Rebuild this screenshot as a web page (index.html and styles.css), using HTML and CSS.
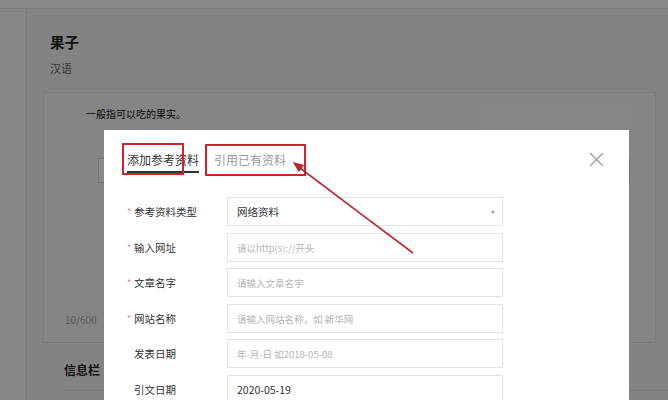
FILE: index.html
```html
<!DOCTYPE html>
<html lang="zh-CN">
<head>
  <meta charset="UTF-8" />
  <title>果子 - 添加参考资料</title>
  <link rel="stylesheet" href="styles.css">
</head>
<body>

<div class="topbar"></div>
<div class="layout">
  <div class="side"></div>
  <div class="main">
    <div class="head">
      <h1>果子</h1>
      <div class="lang">汉语</div>
    </div>
    <div class="card">
      <div class="card-row">
        <p class="desc">一般指可以吃的果实。</p>
        <div class="side-box"></div>
      </div>
      <div class="field-box"></div>
      <div class="count">10/600</div>
    </div>
    <h3 class="section">信息栏</h3>
  </div>
</div>

<div class="mask"></div>

<div class="modal">
  <div class="tabs">
    <div class="tab active">添加参考资料</div>
    <div class="tab">引用已有资料</div>
  </div>
  <span class="close">
    <svg width="15" height="15" viewBox="0 0 15 15"><path d="M1 1L14 14M14 1L1 14" stroke="#999" stroke-width="1.2" fill="none"/></svg>
  </span>

  <div class="form">
    <div class="row">
      <label><i>*</i>参考资料类型</label>
      <div class="input select">网络资料<b class="caret"></b></div>
    </div>
    <div class="row">
      <label><i>*</i>输入网址</label>
      <input class="input" placeholder="请以http(s)://开头">
    </div>
    <div class="row">
      <label><i>*</i>文章名字</label>
      <input class="input" placeholder="请输入文章名字">
    </div>
    <div class="row">
      <label><i>*</i>网站名称</label>
      <input class="input" placeholder="请输入网站名称，如 新华网">
    </div>
    <div class="row">
      <label><i class="off">*</i>发表日期</label>
      <input class="input" placeholder="年-月-日 如2018-05-08">
    </div>
    <div class="row">
      <label><i class="off">*</i>引文日期</label>
      <input class="input" value="2020-05-19">
    </div>
  </div>

  <!-- red marks drawn on the screenshot -->
  <div class="mark mark-1"></div>
  <div class="mark mark-2"></div>
  <svg class="arrow" width="525" height="270" viewBox="0 0 525 270">
    <line x1="309" y1="123" x2="196" y2="38" stroke="#c0272d" stroke-width="1.6"/>
    <polygon points="188.7,32 200.2,35 194.8,42.2" fill="#c0272d"/>
  </svg>
</div>

</body>
</html>
```

FILE: styles.css
```css
body {
  margin: 0;
  font-family: "Noto Sans CJK SC", "Noto Sans", sans-serif;
  background: #f3f3f3;
  color: #333;
  overflow: hidden;
}

.topbar { height: 8px; background: #fff; border-bottom: 1px solid #e6e6e6; }
.layout { display: flex; height: 391px; }
.side { width: 26px; background: #f7f7f7; border-right: 1px solid #e0e0e0; }
.main { flex: 1; }

.head { padding: 24px 0 0 23px; }
.head h1 { margin: 0; font-size: 14.5px; line-height: 18px; font-weight: bold; color: #222; }
.lang { margin-top: 9px; font-size: 11px; line-height: 16px; color: #666; }

.card {
  margin: 16px 12px 0 16px;
  padding: 12px 25px 15px 21px;
  background: #f5f5f5;
  border: 1px solid #e6e6e6;
  border-bottom-color: #e0e0e0;
}
.card-row { display: flex; justify-content: space-between; align-items: flex-start; padding-left: 21px; }
.desc { margin: 2px 0 0; font-size: 10px; line-height: 14px; color: #111; }
.side-box { width: 148px; height: 26px; background: #f8f8f8; }
.field-box { margin: 27px 0 0 33px; height: 23px; background: #fff; border: 1px solid #dcdcdc; }
.count { margin-top: 130px; font-size: 10px; line-height: 14px; color: #aaa; }

.section {
  margin: 19px 0 0 37px;
  padding-bottom: 12px;
  border-bottom: 1px solid #e4e4e4;
  font-size: 12px;
  line-height: 16px;
  color: #222;
}

.mask { position: fixed; top: 0; left: 0; right: 0; bottom: 0; background: rgba(0,0,0,.46); }

.modal {
  position: absolute;
  left: 104px;
  top: 130px;
  width: 525px;
  height: 300px;
  box-sizing: border-box;
  padding: 20px 0 0 23px;
  background: #fff;
}

.tabs { display: flex; gap: 15px; }
.tab {
  font-size: 12px;
  line-height: 20px;
  padding-bottom: 1px;
  color: #999;
  border-bottom: 2px solid transparent;
}
.tab.active { color: #333; border-bottom-color: #333; }

.close { position: absolute; top: 22px; right: 25px; width: 15px; height: 15px; }
.close svg { display: block; }

.form { margin-top: 24px; display: flex; flex-direction: column; gap: 6.6px; }
.row { display: flex; align-items: center; height: 29px; }
.row label { width: 100px; font-size: 10.5px; color: #333; display: flex; align-items: center; }
.row label i { width: 7px; font-style: normal; font-size: 9px; color: #f08080; }
.row label i.off { visibility: hidden; }

.input {
  width: 276px;
  height: 29px;
  box-sizing: border-box;
  padding: 0 9px;
  border: 1px solid #e3e3e3;
  font-family: inherit;
  font-size: 10.5px;
  color: #333;
  outline: none;
  background: #fff;
}
.input::placeholder { font-size: 9.5px; color: #b5b5b5; }
.select { display: flex; align-items: center; position: relative; }
.caret {
  position: absolute;
  right: 7px;
  top: 13px;
  border-left: 2.5px solid transparent;
  border-right: 2.5px solid transparent;
  border-top: 3px solid #999;
}

.mark { position: absolute; border: 2px solid #d3232a; box-sizing: border-box; }
.mark-1 { left: 18px; top: 13px; width: 62px; height: 32px; }
.mark-2 { left: 101px; top: 14px; width: 101px; height: 32px; }
.arrow { position: absolute; left: 0; top: 0; pointer-events: none; }
```
